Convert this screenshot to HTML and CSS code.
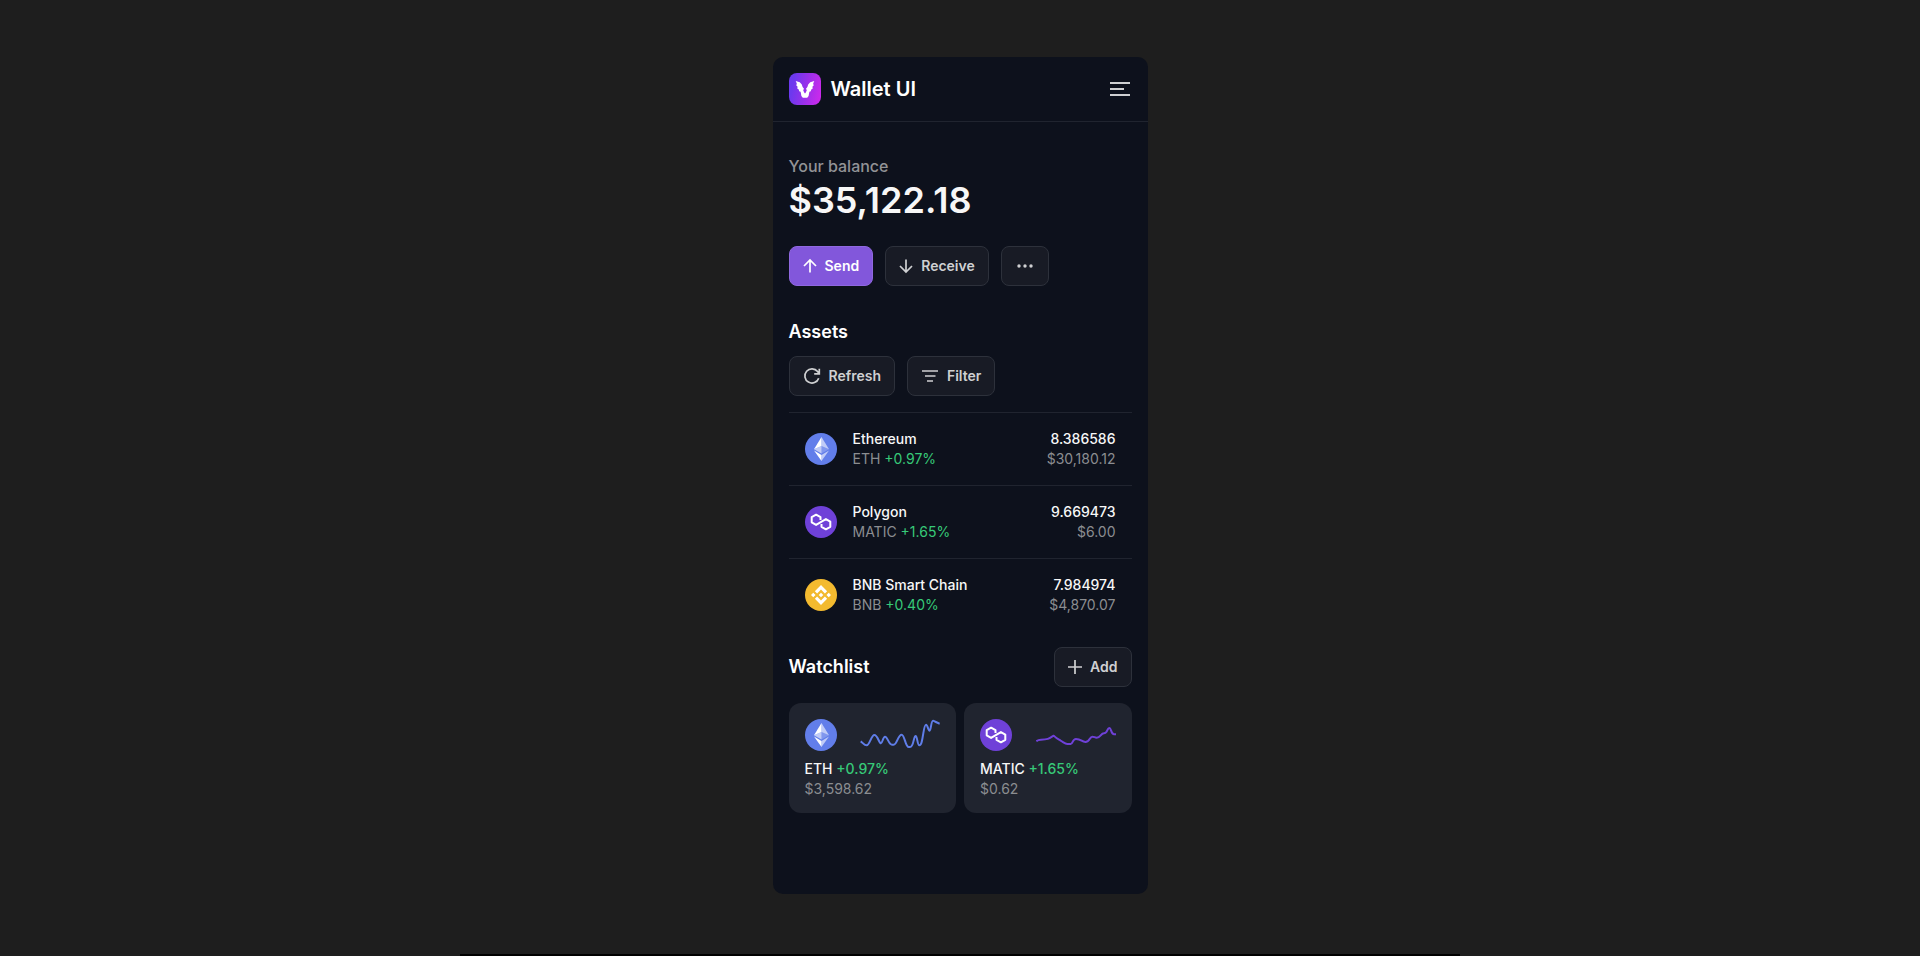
FILE: index.html
```html
<!DOCTYPE html>
<html lang="en">
<head>
<meta charset="utf-8">
<meta name="viewport" content="width=device-width, initial-scale=1">
<title>Wallet UI</title>
<link rel="stylesheet" href="styles.css">
</head>
<body>
<svg class="sprite" aria-hidden="true">
  <symbol id="eth" viewBox="0 0 32 32">
    <circle cx="16" cy="16" r="16" fill="#627eea"/>
    <g fill="#fff">
      <path fill-opacity=".6" d="M16.5 4v8.9l7.5 3.3z"/>
      <path d="M16.5 4L9 16.2l7.5-3.3z"/>
      <path fill-opacity=".6" d="M16.5 22v6L24 17.6z"/>
      <path d="M16.5 28v-6L9 17.6z"/>
      <path fill-opacity=".2" d="M16.5 20.6l7.5-4.4-7.5-3.3z"/>
      <path fill-opacity=".6" d="M9 16.2l7.5 4.4v-7.7z"/>
    </g>
  </symbol>
  <symbol id="matic" viewBox="0 0 32 32">
    <circle cx="16" cy="16" r="16" fill="#6f41d8"/>
    <path fill="none" stroke="#fff" stroke-width="2" stroke-linejoin="round" d="M15.500 14V11.200L11.100 8.700L6.700 11.200V16.300L11.100 18.900L20.900 13.100L25.300 15.700V20.800L20.900 23.300L16.500 20.800V18"/>
  </symbol>
  <symbol id="bnb" viewBox="0 0 32 32">
    <circle cx="16" cy="16" r="16" fill="#f3ba2f"/>
    <path fill="#fff" d="M12.116 14.404L16 10.520l3.886 3.886 2.260-2.260L16 6l-6.144 6.144 2.260 2.260zM6 16l2.260-2.260L10.520 16l-2.260 2.260L6 16zm6.116 1.596L16 21.480l3.886-3.886 2.260 2.259L16 26l-6.144-6.144 2.260-2.260zM21.480 16l2.260-2.260L26 16l-2.260 2.260L21.480 16zm-3.188 0L16 18.294 13.706 16 16 13.706 18.292 16z"/>
  </symbol>
</svg>

<div class="phone">
  <header class="topbar">
    <svg class="logo" viewBox="0 0 32 32" aria-hidden="true">
      <defs><linearGradient id="brand" x1="0" y1="0.4" x2="1" y2="0.6"><stop offset="0.1" stop-color="#6c39ee"/><stop offset="0.5" stop-color="#9631ea"/><stop offset="1" stop-color="#ca2aec"/></linearGradient></defs>
      <rect width="32" height="32" rx="8" fill="url(#brand)"/>
      <path fill="#fff" d="M6.700 8L10.800 9.200L12.800 11.500L13.600 14L15 15.800L14.200 17.300L15.200 19.500L16 20.600L16.800 19.500L17.800 17.300L17 15.800L18.400 14L19.200 11.500L21.200 9.200L25.300 8L24.200 10.600L24.700 12.400L23.500 13.600L23.600 15.800L22.200 16.600L21.800 18.200L20.400 18.800L19.600 23L18.200 24.800H13.800L12.400 23L11.600 18.800L10.200 18.200L9.800 16.600L8.400 15.800L8.500 13.600L7.300 12.400L7.800 10.600Z"/>
    </svg>
    <h1 class="brand">Wallet UI</h1>
    <button class="menu" type="button" aria-label="Menu">
      <svg class="icon" viewBox="0 0 24 24" aria-hidden="true"><path d="M2 6h20M2 12h14M2 18h20"/></svg>
    </button>
  </header>

  <main class="content">
    <section class="balance">
      <p class="balance-label">Your balance</p>
      <p class="balance-value">$35,122.18</p>
      <div class="actions">
        <button class="btn primary" type="button"><svg class="glyph" viewBox="0 0 14 14" aria-hidden="true"><path d="M7 13.500V1M1 7l6-6 6 6"/></svg>Send</button>
        <button class="btn" type="button"><svg class="glyph" viewBox="0 0 14 14" aria-hidden="true"><path d="M7 .5V13M1 7l6 6 6-6"/></svg>Receive</button>
        <button class="btn" type="button" aria-label="More"><svg class="dots" viewBox="0 0 20 16" aria-hidden="true"><circle cx="4" cy="8" r="1.700"/><circle cx="10" cy="8" r="1.700"/><circle cx="16" cy="8" r="1.700"/></svg></button>
      </div>
    </section>

    <section class="assets">
      <h2 class="title">Assets</h2>
      <div class="actions">
        <button class="btn" type="button"><svg class="glyph wide" viewBox="0 0 18 18" aria-hidden="true"><path d="M15.700 11.200A7.100 7.100 0 1 1 14.600 4.600L16.200 6.700M16.300 1.800V6.900H11.200"/></svg>Refresh</button>
        <button class="btn" type="button"><svg class="glyph wide" viewBox="0 0 18 18" aria-hidden="true"><path d="M1 4h16M4 9h10.500M6 14h6"/></svg>Filter</button>
      </div>
      <ul class="list">
        <li class="asset">
          <svg class="coin" aria-hidden="true"><use href="#eth"/></svg>
          <div class="info"><p class="name">Ethereum</p><p class="sub">ETH <span class="up">+0.97%</span></p></div>
          <div class="amount"><p class="name">8.386586</p><p class="sub">$30,180.12</p></div>
        </li>
        <li class="asset">
          <svg class="coin" aria-hidden="true"><use href="#matic"/></svg>
          <div class="info"><p class="name">Polygon</p><p class="sub">MATIC <span class="up">+1.65%</span></p></div>
          <div class="amount"><p class="name">9.669473</p><p class="sub">$6.00</p></div>
        </li>
        <li class="asset">
          <svg class="coin" aria-hidden="true"><use href="#bnb"/></svg>
          <div class="info"><p class="name">BNB Smart Chain</p><p class="sub">BNB <span class="up">+0.40%</span></p></div>
          <div class="amount"><p class="name">7.984974</p><p class="sub">$4,870.07</p></div>
        </li>
      </ul>
    </section>

    <section class="watchlist">
      <div class="watch-head">
        <h2 class="title">Watchlist</h2>
        <button class="btn" type="button"><svg class="glyph" viewBox="0 0 14 14" aria-hidden="true"><path d="M7 0v14M0 7h14"/></svg>Add</button>
      </div>
      <div class="cards">
        <article class="card">
          <div class="card-top">
            <svg class="coin" aria-hidden="true"><use href="#eth"/></svg>
            <svg class="spark eth" viewBox="0 0 240 96" aria-hidden="true"><path d="M2 67C10 72 12 79 20 79C29 79 34 48 43 48C53 48 57 73 63 73C67 73 69 53 75 53C83 53 86 77 96 77H101C111 77 114 47 125 47C134 47 136 84 146 84H150C162 84 160 51 167 51C172 51 172 79 178 79C190 79 189 17 198 17C203 17 204 35 209 35C213 35 213 5 219 5C225 7 232 12 239 14"/></svg>
          </div>
          <p class="name">ETH <span class="up">+0.97%</span></p>
          <p class="sub">$3,598.62</p>
        </article>
        <article class="card">
          <div class="card-top">
            <svg class="coin" aria-hidden="true"><use href="#matic"/></svg>
            <svg class="spark matic" viewBox="0 0 240 96" aria-hidden="true"><path d="M1 67C5 63 10 62 15 62C34 62 38 60 53 50C63 60 68 61 74 65C84 71 88 75 94 75H104C111 75 109 60 120 60C136 60 137 69 148 69C163 69 160 53 169 53C175 53 176 56 182 56C194 56 194 43 204 43C215 43 213 27 220 27C226 27 225 46 234 46H240"/></svg>
          </div>
          <p class="name">MATIC <span class="up">+1.65%</span></p>
          <p class="sub">$0.62</p>
        </article>
      </div>
    </section>
  </main>
</div>
<div class="strip"></div>
</body>
</html>
```
FILE: styles.css
```css
* { box-sizing: border-box; margin: 0; padding: 0; }
body {
  min-height: 100vh;
  padding-top: 57px;
  display: flex;
  flex-direction: column;
  align-items: center;
  background: #1e1e1e;
  color: #f7f7f7;
  font: 400 14px/20px Inter, "Liberation Sans", sans-serif;
}
.sprite { position: absolute; width: 0; height: 0; }
.phone {
  width: 100%;
  max-width: 375px;
  background: #0d111c;
  border-radius: 10px;
}
.topbar {
  display: flex;
  align-items: center;
  gap: 10px;
  padding: 16px;
  border-bottom: 1px solid #20242f;
}
.logo { width: 32px; height: 32px; }
.brand { flex: 1; font-size: 20px; line-height: 28px; font-weight: 600; color: #fff; }
.menu {
  display: flex;
  border: 0;
  background: none;
  color: #cfd0d2;
  cursor: pointer;
}
.icon { width: 24px; height: 24px; fill: none; stroke: currentColor; stroke-width: 2; }
.content { padding: 32px 16px 81px; }
.balance-label { font-size: 16px; line-height: 24px; font-weight: 500; color: #929396; }
.balance-value { font-size: 36px; line-height: 44px; font-weight: 600; }
.actions { display: flex; gap: 12px; }
.balance .actions { margin-top: 24px; }
.btn {
  display: inline-flex;
  align-items: center;
  gap: 8px;
  height: 40px;
  padding: 0 13px;
  border: 1px solid #2d313b;
  border-radius: 8px;
  background: #181b25;
  color: #cfd0d2;
  font: 600 14px/20px Inter, "Liberation Sans", sans-serif;
  cursor: pointer;
}
.primary { background: #8257db; border-color: #8f68df; color: #fff; }
.glyph { width: 14px; height: 14px; overflow: visible; fill: none; stroke: currentColor; stroke-width: 1.7; }
.glyph.wide { width: 18px; height: 18px; }
.dots { width: 20px; height: 16px; fill: currentColor; }
.title { font-size: 18px; line-height: 28px; font-weight: 600; color: #fff; }
.assets { margin-top: 32px; }
.assets .title { margin-bottom: 10px; }
.list { margin-top: 16px; list-style: none; }
.asset {
  display: flex;
  align-items: center;
  gap: 16px;
  padding: 16px;
  border-top: 1px solid #20242f;
}
.coin { width: 32px; height: 32px; flex: none; }
.info { flex: 1; }
.amount { text-align: right; }
.name { font-weight: 500; }
.sub { color: #8b8d91; }
.up { color: #37c978; }
.watchlist { margin-top: 16px; }
.watch-head { display: flex; align-items: center; justify-content: space-between; }
.cards { display: grid; grid-template-columns: 1fr 1fr; gap: 8px; margin-top: 16px; }
.card { padding: 16px 16px 14px; border-radius: 12px; background: #20242f; }
.card-top { display: flex; justify-content: space-between; margin-bottom: 8px; }
.spark { width: 80px; height: 32px; fill: none; stroke-width: 6; stroke-linejoin: round; }
.spark.eth { stroke: #5f7de8; }
.spark.matic { stroke: #6f41d8; }
.strip { width: 100%; max-width: 1000px; height: 2px; margin-top: auto; background: #000; }
```
